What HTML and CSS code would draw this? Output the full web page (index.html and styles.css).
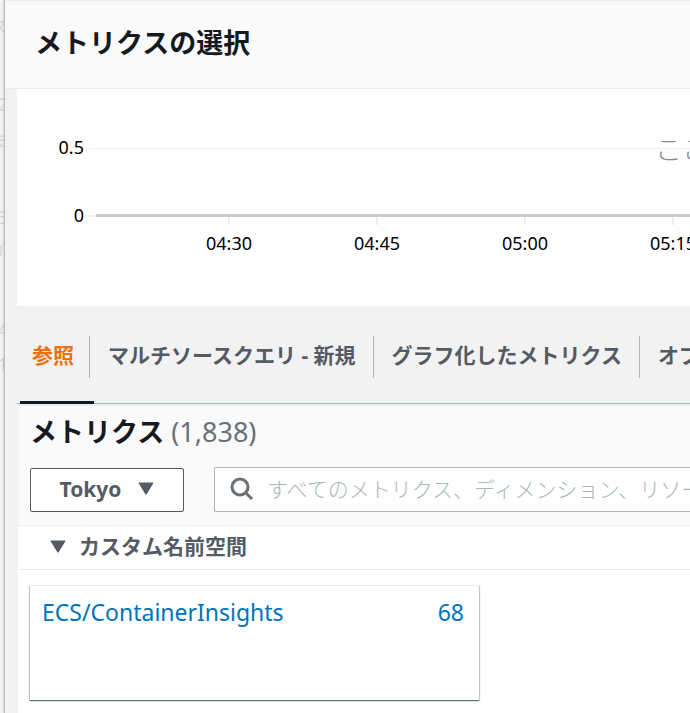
FILE: index.html
```html
<!DOCTYPE html>
<html lang="ja">
<head>
    <meta charset="UTF-8">
    <meta name="viewport" content="width=device-width, initial-scale=1.0">
    <title>メトリクスの選択</title>
    <link rel="stylesheet" href="styles.css">
</head>
<body>
    <svg class="backdrop" aria-hidden="true">
        <g text-anchor="end">
            <text x="8" y="34">ス</text>
            <text x="8" y="111">2</text>
            <text x="8" y="148">ま</text>
            <text x="8" y="224">3</text>
            <text x="8" y="256">が</text>
            <text x="8" y="336">4</text>
            <text x="8" y="371">1</text>
        </g>
    </svg>

    <div class="dialog" role="dialog" aria-labelledby="dialogTitle">
        <header class="dialog-header">
            <h1 id="dialogTitle">メトリクスの選択</h1>
        </header>

        <div class="dialog-body">
            <section class="graph">
                <svg class="chart" role="img" aria-label="グラフ">
                    <line class="grid-line" x1="72" y1="59.5" x2="100%" y2="59.5"/>
                    <line class="grid-line thick" x1="72" y1="127" x2="80" y2="127"/>
                    <path class="tick" d="M212 128v8M360 128v8M508 128v8M656 128v8"/>
                    <line class="axis" x1="79" y1="126.5" x2="100%" y2="126.5"/>
                    <g class="labels">
                        <text x="67" y="65" text-anchor="end">0.5</text>
                        <text x="67" y="133" text-anchor="end">0</text>
                        <text x="212" y="161" text-anchor="middle">04:30</text>
                        <text x="360" y="161" text-anchor="middle">04:45</text>
                        <text x="508" y="161" text-anchor="middle">05:00</text>
                        <text x="656" y="161" text-anchor="middle">05:15</text>
                    </g>
                    <text class="hint" x="638" y="71">ここ</text>
                </svg>
            </section>

            <nav class="tabs">
                <a href="#browse" class="tab active">参照</a>
                <a href="#query" class="tab">マルチソースクエリ - 新規</a>
                <a href="#graphed" class="tab">グラフ化したメトリクス</a>
                <a href="#options" class="tab">オプション</a>
            </nav>

            <section class="panel">
                <div class="panel-header">
                    <h2>メトリクス <span class="count">(1,838)</span></h2>
                    <div class="toolbar">
                        <button type="button" class="region-button">
                            Tokyo
                            <svg class="caret" viewBox="0 0 16 13"><path d="M0.500 1Q0.500 0.500 1 0.500h14q.5 0 .5.5L8.500 12.500h-1z"/></svg>
                        </button>
                        <div class="search">
                            <svg class="search-icon" viewBox="0 0 24 24"><circle cx="10" cy="10" r="8"/><path d="M15.500 15.500l6.500 6.500"/></svg>
                            <input type="text" aria-label="メトリクスの検索" placeholder="すべてのメトリクス、ディメンション、リソース ID">
                        </div>
                    </div>
                </div>

                <button type="button" class="group-toggle" aria-expanded="true">
                    <svg class="caret" viewBox="0 0 16 13"><path d="M0.500 1Q0.500 0.500 1 0.500h14q.5 0 .5.5L8.500 12.500h-1z"/></svg>
                    カスタム名前空間
                </button>

                <div class="namespaces">
                    <a href="#ecs" class="namespace">
                        <span>ECS/ContainerInsights</span>
                        <span>68</span>
                    </a>
                </div>
            </section>
        </div>
    </div>
</body>
</html>
```
FILE: styles.css
```css
* {
    box-sizing: border-box;
}

body {
    margin: 0;
    min-height: 100vh;
    display: flex;
    background-color: #f2f2f2;
    font-family: "Noto Sans", "Noto Sans CJK JP", sans-serif;
    font-size: 21px;
    line-height: 28px;
    color: #545b64;
}

h1, h2 {
    margin: 0;
    font-size: 27px;
    line-height: 36px;
    color: #16191f;
}

a {
    text-decoration: none;
}

button, input {
    font: inherit;
    color: inherit;
}

/* sliver of the dimmed page left of the dialog */
.backdrop {
    flex: none;
    width: 4px;
    height: 400px;
    overflow: hidden;
    font-size: 18px;
    fill: #d5dadb;
}

.dialog {
    flex: 1;
    min-width: 0;
    display: flex;
    flex-direction: column;
    border-left: 1px solid #b8c0c3;
    box-shadow: 0 0 2px rgba(0, 28, 36, 0.3);
}

.dialog-header {
    padding: 24px 30px 27px;
    background-color: #fafafa;
    border-top: 1px solid #eaeded;
    border-bottom: 1px solid #eaeded;
}

.dialog-body {
    flex: 1;
    display: flex;
    flex-direction: column;
    padding-left: 12px;
    background-color: #f2f2f2;
}

/* Graph */
.graph {
    background-color: #fff;
}

.chart {
    display: block;
    width: 100%;
    height: 217px;
    overflow: hidden;
}

.grid-line {
    stroke: #eee;
}

.thick {
    stroke-width: 2px;
}

.tick {
    fill: none;
    stroke: #eee;
    stroke-width: 2px;
}

.axis {
    stroke: #ccc;
    stroke-width: 3px;
}

.labels {
    font-size: 18px;
    fill: #000;
}

.hint {
    font-size: 27px;
    font-weight: 300;
    fill: #888;
}

/* Tabs */
.tabs {
    display: flex;
    padding: 30px 0 26px;
    overflow: hidden;
    box-shadow: inset 0 -1px #aab7b8;
}

.tab {
    flex: none;
    padding: 5px 17px 9px 18px;
    border-right: 1px solid #aab7b8;
    font-weight: 700;
    color: #545b64;
}

.tab:last-child {
    border-right: none;
}

.tab.active {
    position: relative;
    padding-left: 15px;
    padding-right: 15px;
    color: #ec7211;
}

.tab.active::after {
    content: "";
    position: absolute;
    left: 3px;
    right: -5px;
    bottom: -26px;
    height: 3px;
    background-color: #16191f;
}

/* Metrics panel */
.panel {
    flex: 1;
    margin-left: 1px;
    background-color: #fff;
}

.panel-header {
    padding: 8px 0 13px 12px;
    background-color: #fafafa;
    border-top: 2px solid #eaeded;
    border-bottom: 1px solid #eaeded;
}

.count {
    font-weight: 400;
    color: #687078;
}

.toolbar {
    display: flex;
    align-items: center;
    gap: 30px;
    margin-top: 17px;
}

.region-button {
    flex: none;
    width: 154px;
    height: 44px;
    display: flex;
    align-items: center;
    justify-content: center;
    gap: 17px;
    padding: 0 0 2px;
    border: 1px solid #545b64;
    border-radius: 2px;
    background-color: #fff;
    font-weight: 700;
    cursor: pointer;
}

.caret {
    flex: none;
    width: 16px;
    height: 13px;
    fill: #545b64;
}

.search {
    flex: 1;
    min-width: 0;
    height: 45px;
    display: flex;
    align-items: center;
    gap: 13px;
    padding: 0 0 2px 15px;
    border: 1px solid #aab7b8;
    border-right: none;
    border-radius: 2px 0 0 2px;
    background-color: #fff;
}

.search-icon {
    flex: none;
    width: 24px;
    height: 24px;
    fill: none;
    stroke: #687078;
    stroke-width: 3px;
}

.search input {
    flex: 1;
    min-width: 0;
    padding: 0;
    border: none;
    outline: none;
    background: none;
}

.search input::placeholder {
    font-weight: 300;
    color: #aab7b8;
    opacity: 1;
}

.group-toggle {
    width: 100%;
    display: flex;
    align-items: center;
    gap: 13px;
    padding: 6px 0 9px 32px;
    border: none;
    border-bottom: 1px solid #eaeded;
    background-color: #fff;
    font-weight: 700;
    text-align: left;
    cursor: pointer;
}

.namespaces {
    display: flex;
    flex-wrap: wrap;
    padding: 15px 12px 12px;
}

.namespace {
    width: 449px;
    min-height: 115px;
    display: flex;
    justify-content: space-between;
    align-items: flex-start;
    padding: 12px 15px 12px 12px;
    border-top: 1px solid #eaeded;
    background-color: #fff;
    box-shadow: 0 1px 1px rgba(0, 28, 36, 0.4), 1px 1px 1px rgba(0, 28, 36, 0.2), -1px 1px 1px rgba(0, 28, 36, 0.2);
    font-size: 23px;
    color: #0073bb;
}
```
